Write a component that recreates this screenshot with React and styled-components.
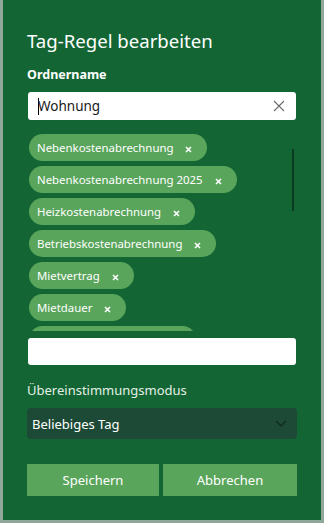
import React, { useState } from 'react';
import styled, { createGlobalStyle } from 'styled-components';

const GlobalStyle = createGlobalStyle`
    html, body {
        margin: 0;
        padding: 0;
        background: #8fa89a;
    }
    body {
        font-family: 'Noto Sans', 'Open Sans', sans-serif;
    }
`;

const tagsList = [
    'Nebenkostenabrechnung',
    'Nebenkostenabrechnung 2025',
    'Heizkostenabrechnung',
    'Betriebskostenabrechnung',
    'Mietvertrag',
    'Mietdauer',
    'Mietkostenabrechnung',
];

export default function App() {
    const [name, setName] = useState('Wohnung');
    const [tags, setTags] = useState(tagsList);

    return (
        <>
            <GlobalStyle />
            <Page>
                <Dialog>
                    <Title>Tag-Regel bearbeiten</Title>
                    <Label>Ordnername</Label>
                    <InputBox>
                        <Caret />
                        <TextInput value={name} onChange={e => setName(e.target.value)} />
                        <ClearButton aria-label='clear'>
                            <svg width='12' height='12' viewBox='0 0 12 12'>
                                <path d='M1 1 L11 11 M11 1 L1 11' stroke='#6b6b6b' strokeWidth='1.1' fill='none' />
                            </svg>
                        </ClearButton>
                    </InputBox>
                    <TagArea>
                        <TagScroll>
                            {tags.map(t => (
                                <Tag key={t}>
                                    <TagText>{t}</TagText>
                                    <TagRemove onClick={() => setTags(tags.filter(x => x !== t))}>
                                        <svg width='7' height='7' viewBox='0 0 7 7'>
                                            <path d='M1 1 L6 6 M6 1 L1 6' stroke='#ffffff' strokeWidth='1.6' fill='none' />
                                        </svg>
                                    </TagRemove>
                                </Tag>
                            ))}
                        </TagScroll>
                        <ScrollThumb />
                    </TagArea>
                    <NewTagInput />
                    <ModeLabel>Übereinstimmungsmodus</ModeLabel>
                    <Select>
                        <span>Beliebiges Tag</span>
                        <svg width='12' height='7' viewBox='0 0 12 7'>
                            <path d='M1 1 L6 6 L11 1' stroke='#0c2a1c' strokeWidth='1.2' fill='none' />
                        </svg>
                    </Select>
                    <Buttons>
                        <Button>Speichern</Button>
                        <Button>Abbrechen</Button>
                    </Buttons>
                </Dialog>
            </Page>
        </>
    );
}

const Page = styled.div`
    width: 324px;
    height: 523px;
    padding: 0 3px 3px 3px;
    box-sizing: border-box;
    overflow: hidden;
`;

const Dialog = styled.div`
    width: 318px;
    height: 520px;
    background: #136634;
    box-sizing: border-box;
    padding: 27px 24px 0 24px;
    display: flex;
    flex-direction: column;
`;

const Title = styled.h1`
    margin: 0;
    font-weight: 400;
    font-size: 18.6px;
    line-height: 28px;
    color: #ffffff;
`;

const Label = styled.div`
    margin-top: 11px;
    font-size: 12.5px;
    font-weight: 700;
    line-height: 18px;
    color: #ffffff;
`;

const InputBox = styled.div`
    margin-top: 8px;
    margin-left: 1px;
    width: 268px;
    height: 28px;
    background: #ffffff;
    border-radius: 3px;
    display: flex;
    align-items: center;
    padding: 0 10px 0 10px;
    box-sizing: border-box;
`;

const Caret = styled.span`
    width: 1px;
    height: 17px;
    background: #000000;
    margin-right: -1px;
`;

const TextInput = styled.input`
    flex: 1;
    border: none;
    outline: none;
    background: transparent;
    font-family: 'Noto Sans', sans-serif;
    font-size: 13.5px;
    color: #1a1a1a;
    padding: 0;
`;

const ClearButton = styled.span`
    display: flex;
    align-items: center;
    margin-right: 1px;
`;

const TagArea = styled.div`
    position: relative;
    margin-top: 14px;
    height: 197px;
    overflow: hidden;
`;

const TagScroll = styled.div`
    display: flex;
    flex-direction: column;
    align-items: flex-start;
    gap: 5px;
    padding-left: 2px;
`;

const Tag = styled.div`
    display: flex;
    align-items: center;
    height: 27px;
    border-radius: 14px;
    background: #5aa55c;
    padding: 0 15px 0 8px;
    box-sizing: border-box;
`;

const TagText = styled.span`
    font-size: 11.4px;
    color: #ffffff;
    white-space: nowrap;
`;

const TagRemove = styled.span`
    display: flex;
    margin-left: 12px;
    margin-top: 3px;
    cursor: pointer;
`;

const ScrollThumb = styled.div`
    position: absolute;
    left: 265px;
    top: 15px;
    width: 2px;
    height: 62px;
    background: #0a3a1f;
`;

const NewTagInput = styled.input`
    margin-top: 7px;
    margin-left: 1px;
    width: 268px;
    height: 27px;
    border: none;
    border-radius: 3px;
    background: #ffffff;
    outline: none;
    box-sizing: border-box;
`;

const ModeLabel = styled.div`
    margin-top: 15px;
    font-size: 13px;
    line-height: 20px;
    color: #e3efe6;
`;

const Select = styled.div`
    margin-top: 8px;
    width: 270px;
    height: 31px;
    background: #1d4a36;
    border-radius: 4px;
    display: flex;
    align-items: center;
    justify-content: space-between;
    padding: 0 10px 0 5px;
    box-sizing: border-box;
    font-size: 13px;
    color: #ffffff;
`;

const Buttons = styled.div`
    margin-top: 25px;
    width: 270px;
    display: grid;
    grid-template-columns: 132px 134px;
    gap: 4px;
`;

const Button = styled.button`
    height: 32px;
    border: none;
    border-radius: 0;
    background: #5aa55c;
    color: #ffffff;
    font-family: 'Noto Sans', sans-serif;
    font-size: 13px;
    padding: 0;
    cursor: pointer;
`;
